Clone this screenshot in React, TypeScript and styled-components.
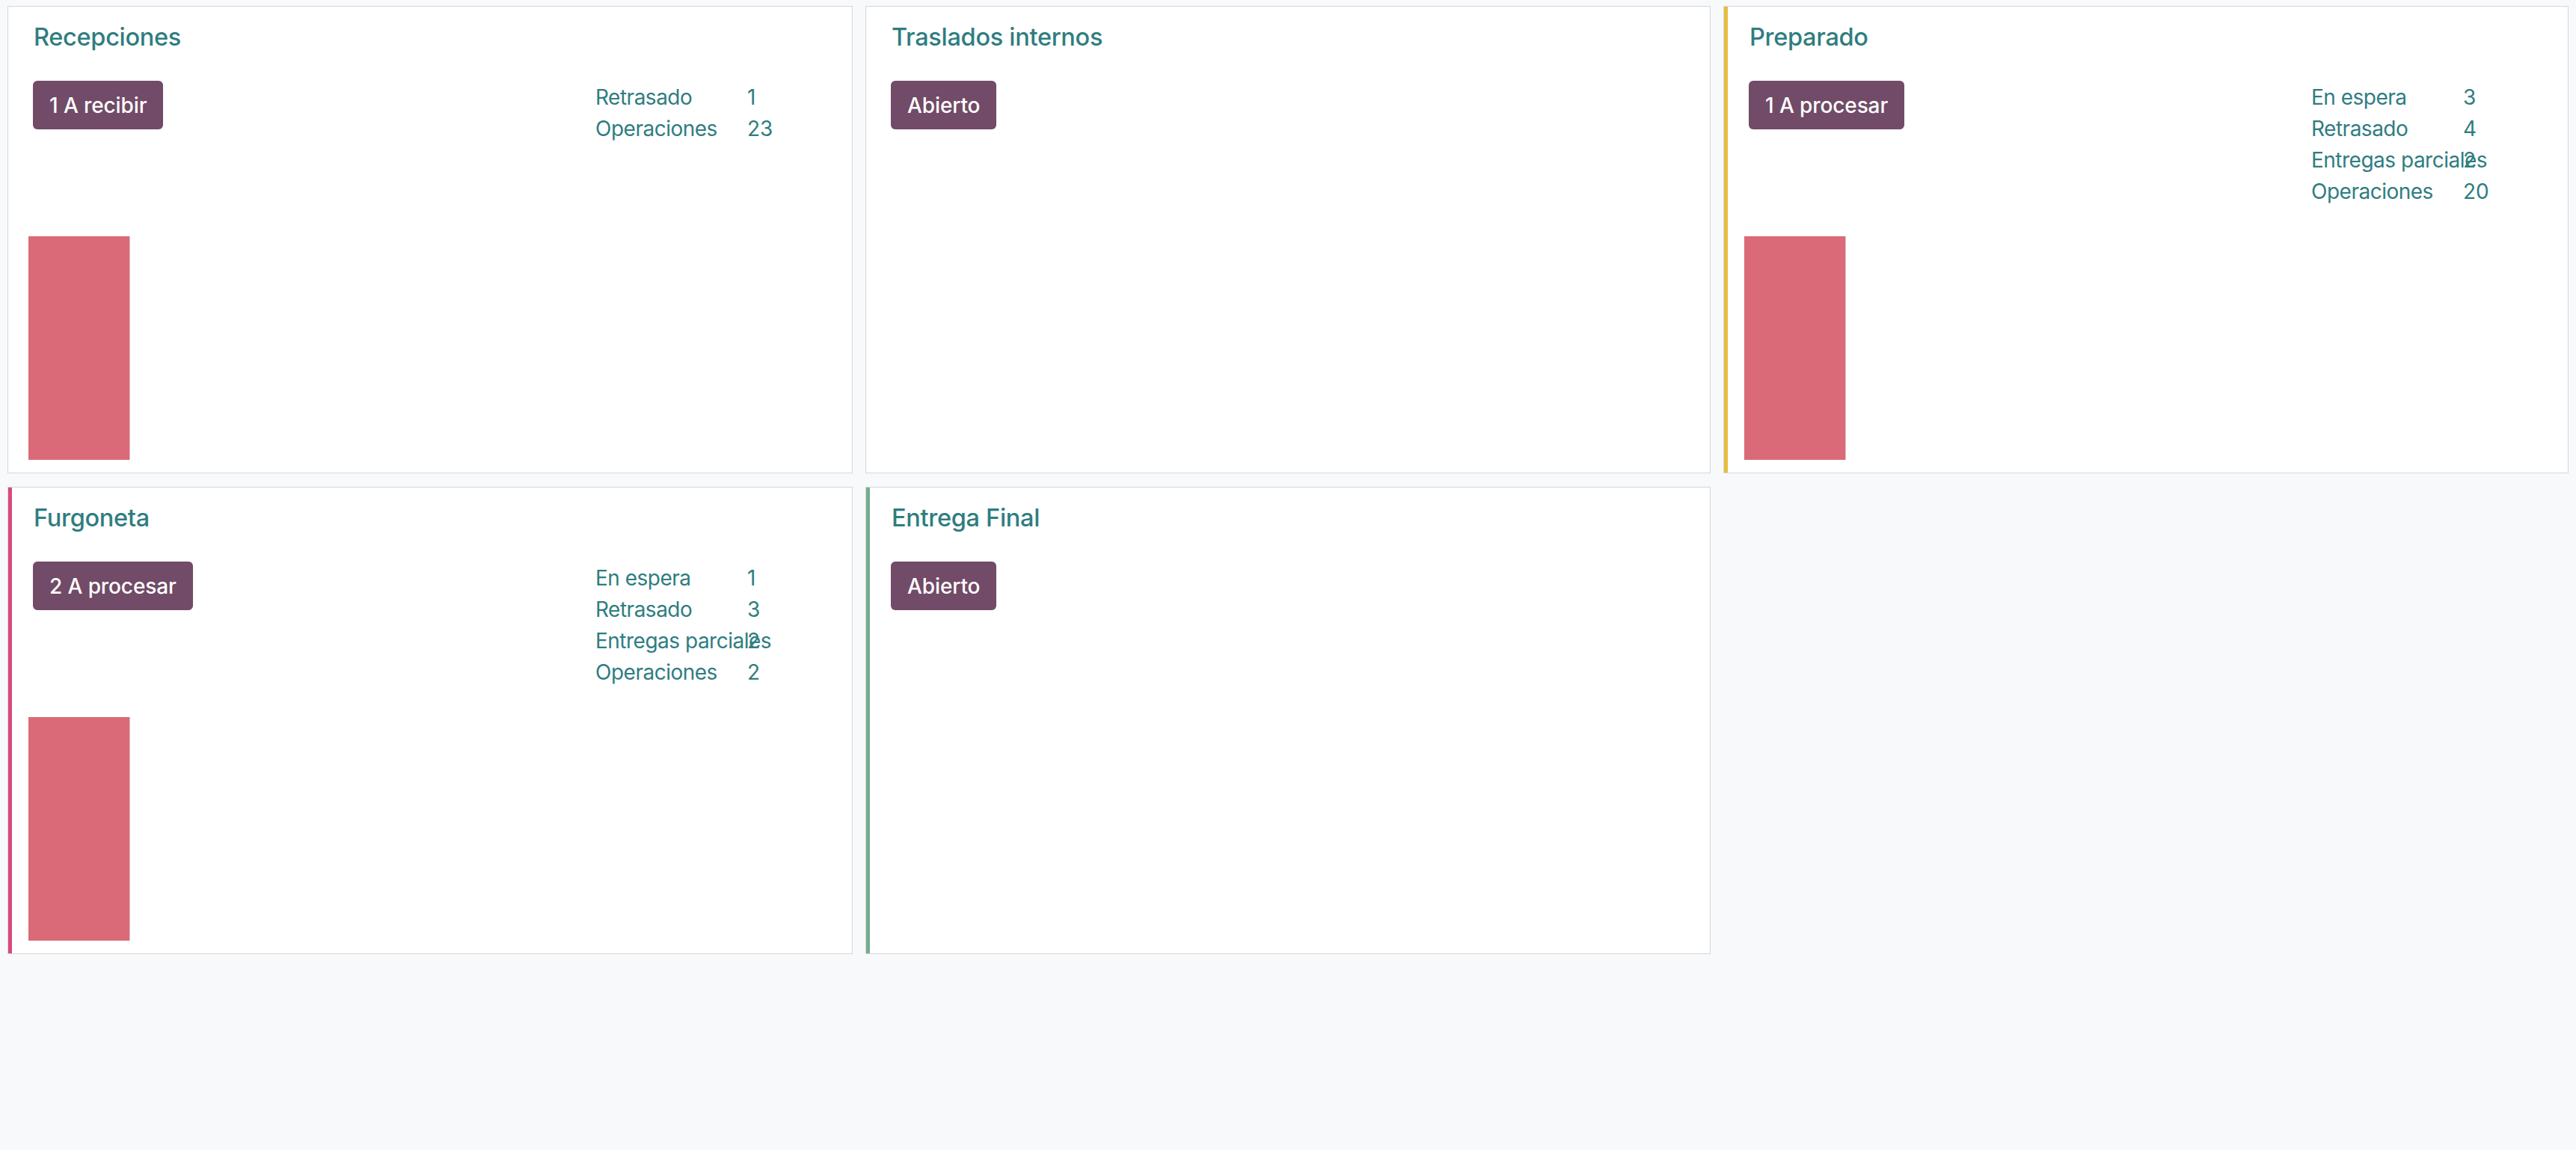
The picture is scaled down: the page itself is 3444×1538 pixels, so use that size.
import React from "react";
import styled, { createGlobalStyle } from "styled-components";

const GlobalStyle = createGlobalStyle`
  html, body {
    margin: 0;
    padding: 0;
    background: #f8f9fa;
  }
  body {
    font-family: Inter, "Noto Sans", "Liberation Sans", sans-serif;
    color: #2f7d7f;
  }
  * { box-sizing: border-box; }
`;

const Board = styled.div`
  display: grid;
  grid-template-columns: repeat(3, 1130px);
  column-gap: 17px;
  row-gap: 18px;
  padding: 8px 0 0 10px;
  min-height: 1538px;
  align-content: start;
`;

const Card = styled.div<{ $accent?: string }>`
  position: relative;
  display: flex;
  flex-direction: column;
  height: 625px;
  background: #ffffff;
  border: 1px solid #d4d7db;
  box-shadow: ${(p) => (p.$accent ? `inset 5px 0 0 ${p.$accent}` : "none")};
`;

const Title = styled.div`
  padding: 21px 0 0 34px;
  font-size: 32.5px;
  line-height: 40px;
  font-weight: 500;
  color: #2f7d7f;
  letter-spacing: -0.3px;
`;

const Body = styled.div`
  display: grid;
  grid-template-columns: 752px 1fr;
  padding-left: 33px;
  margin-top: 38px;
  align-items: start;
`;

const ActionButton = styled.button`
  display: inline-flex;
  align-items: center;
  height: 65px;
  padding: 0 22px;
  border: none;
  border-radius: 6px;
  background: #714b67;
  color: #ffffff;
  font-family: Inter, "Noto Sans", sans-serif;
  font-size: 28px;
  font-weight: 500;
  letter-spacing: -0.1px;
  cursor: pointer;
  justify-self: start;
`;

const Stats = styled.div`
  display: flex;
  flex-direction: column;
  padding-top: 1px;
`;

const StatRow = styled.div`
  display: grid;
  grid-template-columns: 203px auto;
  font-size: 28px;
  line-height: 42px;
  color: #2f7d7f;
  white-space: nowrap;
`;

const StatLabel = styled.span`
  overflow: visible;
  letter-spacing: -0.5px;
`;

const StatValue = styled.span``;

const Graph = styled.div`
  margin-top: auto;
  padding: 0 0 17px 27px;
  line-height: 0;
`;

type Stat = [string, string];

type CardData = {
  title: string;
  button: string;
  accent?: string;
  stats: Stat[];
  graph: boolean;
};

const cards: CardData[] = [
  {
    title: "Recepciones",
    button: "1 A recibir",
    stats: [
      ["Retrasado", "1"],
      ["Operaciones", "23"],
    ],
    graph: true,
  },
  {
    title: "Traslados internos",
    button: "Abierto",
    stats: [],
    graph: false,
  },
  {
    title: "Preparado",
    button: "1 A procesar",
    accent: "#e6bd3e",
    stats: [
      ["En espera", "3"],
      ["Retrasado", "4"],
      ["Entregas parciales", "2"],
      ["Operaciones", "20"],
    ],
    graph: true,
  },
  {
    title: "Furgoneta",
    button: "2 A procesar",
    accent: "#d9487f",
    stats: [
      ["En espera", "1"],
      ["Retrasado", "3"],
      ["Entregas parciales", "2"],
      ["Operaciones", "2"],
    ],
    graph: true,
  },
  {
    title: "Entrega Final",
    button: "Abierto",
    accent: "#74ad8e",
    stats: [],
    graph: false,
  },
];

const BarChart: React.FC = () => (
  <svg width="136" height="299" viewBox="0 0 136 299">
    <rect x="0" y="0" width="135" height="299" fill="#da6a77" />
    <rect x="135" y="0" width="1" height="299" fill="#e3c3c8" />
  </svg>
);

export default function App() {
  return (
    <>
      <GlobalStyle />
      <Board>
        {cards.map((c) => (
          <Card key={c.title} $accent={c.accent}>
            <Title>{c.title}</Title>
            <Body>
              <ActionButton>{c.button}</ActionButton>
              <Stats>
                {c.stats.map(([label, value]) => (
                  <StatRow key={label}>
                    <StatLabel>{label}</StatLabel>
                    <StatValue>{value}</StatValue>
                  </StatRow>
                ))}
              </Stats>
            </Body>
            {c.graph && (
              <Graph>
                <BarChart />
              </Graph>
            )}
          </Card>
        ))}
      </Board>
    </>
  );
}
